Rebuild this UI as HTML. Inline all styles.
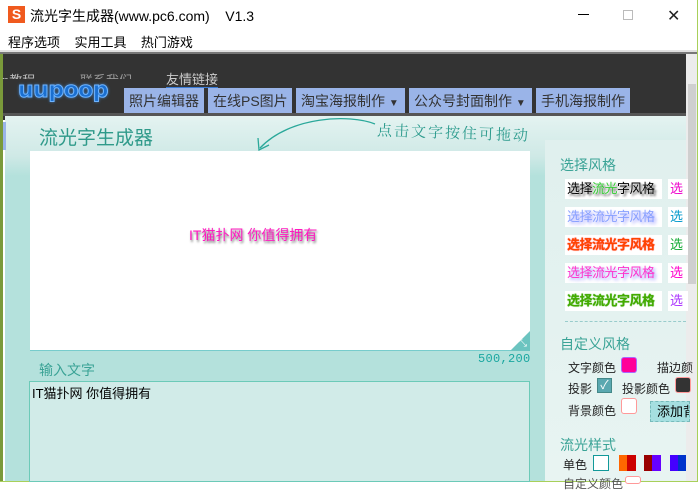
<!DOCTYPE html><html><head><meta charset="utf-8"><style>
*{margin:0;padding:0;box-sizing:border-box}
body{width:698px;height:482px;overflow:hidden;position:relative;background:#fff;font-family:"Liberation Sans","Noto Sans CJK SC",sans-serif;font-size:13px;color:#000}
.a{position:absolute}
.tab{position:absolute;top:88px;height:25px;background:#9ab4e8;color:#333;font-size:14px;line-height:27px;padding-left:5px;white-space:nowrap}
.sw{position:absolute;width:16px;height:16px;border-radius:3px}
.sty{position:absolute;width:97px;height:20px;background:#fff;font-size:13px;line-height:20px;padding-left:2px;letter-spacing:-0.5px;white-space:nowrap;overflow:hidden}
.lbl{position:absolute;font-size:12px;color:#222;white-space:nowrap}
</style></head><body>
<div class="a" style="left:8px;top:6px;width:17px;height:17px;background:#f05a1e;color:#fff;font-weight:bold;font-size:14px;line-height:17px;text-align:center">S</div>
<div class="a" style="left:30px;top:6px;font-size:14px">流光字生成器(www.pc6.com)&nbsp;&nbsp;&nbsp; V1.3</div>
<div class="a" style="left:578px;top:14px;width:11px;height:1px;background:#000"></div>
<div class="a" style="left:623px;top:10px;width:10px;height:10px;border:1px solid #bbb"></div>
<div class="a" style="left:667px;top:6px;font-size:16px;color:#222">✕</div>
<div class="a" style="left:8px;top:32px;font-size:13px">程序选项&nbsp;&nbsp;&nbsp; 实用工具&nbsp;&nbsp;&nbsp; 热门游戏</div>
<div class="a" style="left:0;top:50px;width:698px;height:3px;background:#e0e0e0"></div>
<div class="a" style="left:0;top:52px;width:698px;height:2px;background:#777"></div>
<div class="a" style="left:0;top:54px;width:688px;height:66px;background:#333"></div>
<div class="a" style="left:0;top:54px;width:3px;height:428px;background:#7a9a3a"></div>
<div class="a" style="left:2px;top:70px;color:#bbb;font-size:13px;height:9px;overflow:hidden">p教程</div>
<div class="a" style="left:80px;top:70px;color:#999;font-size:13px;height:9px;overflow:hidden">联系我们</div>
<div class="a" style="left:166px;top:72px;color:#ccc;font-size:13px;border-bottom:1px solid #3a7bd5;line-height:15px">友情链接</div>
<div class="a" style="left:18px;top:78px;font-family:'DejaVu Sans',sans-serif;font-weight:bold;font-size:22px;color:#1a6fd0;letter-spacing:-0.5px;-webkit-text-stroke:1px #6fb4ff;text-shadow:0 0 3px #48a0ff">uupoop</div>
<div class="tab" style="left:124px;width:80px">照片编辑器</div>
<div class="tab" style="left:208px;width:84px">在线PS图片</div>
<div class="tab" style="left:296px;width:109px">淘宝海报制作 <span style="font-size:10px">▼</span></div>
<div class="tab" style="left:409px;width:123px">公众号封面制作 <span style="font-size:10px">▼</span></div>
<div class="tab" style="left:536px;width:94px">手机海报制作</div>
<div class="a" style="left:3px;top:113px;width:685px;height:3px;background:#555"></div>
<div class="a" style="left:686px;top:54px;width:12px;height:428px;background:#ececec"></div>
<div class="a" style="left:688px;top:84px;width:8px;height:200px;background:#cfcfcf"></div>
<div class="a" style="left:697px;top:0;width:1px;height:482px;background:#a8d05a"></div>
<div class="a" style="left:0;top:481px;width:698px;height:1px;background:#a8d05a"></div>
<div class="a" style="left:5px;top:116px;width:681px;height:365px;background:linear-gradient(180deg,#e4f3f1 0,#cfe9e6 40px,#b4e1dc 60px,#b4e1dc 100%)"></div>
<div class="a" style="left:3px;top:122px;width:3px;height:28px;background:#9ab4e8"></div>
<div class="a" style="left:545px;top:140px;width:141px;height:341px;background:linear-gradient(180deg,#e0f0ee,#e8f4f2)"></div>
<div class="a" style="left:39px;top:123px;font-size:19px;color:#2f9a8a">流光字生成器</div>
<svg class="a" style="left:250px;top:116px" width="130" height="40"><path d="M125 8 C100 -2 40 0 10 32" stroke="#2aa89a" stroke-width="1.3" fill="none"/><path d="M8 22 L9 34 L19 29" stroke="#2aa89a" stroke-width="1.3" fill="none"/></svg>
<div class="a" style="left:377px;top:122px;font-size:15px;color:#2a9a8c;font-family:'Noto Serif CJK SC',serif;letter-spacing:2px;transform:rotate(2deg)">点击文字按住可拖动</div>
<div class="a" style="left:30px;top:151px;width:500px;height:200px;background:#fff;border-bottom:1px solid #7cc;"></div>
<div class="a" style="left:510px;top:331px;width:0;height:0;border-left:20px solid transparent;border-bottom:20px solid #6cc4c0"></div>
<div class="a" style="left:519px;top:338px;color:#fff;font-size:10px">⤡</div>
<div class="a" style="left:189px;top:225px;font-size:14px;color:#ff19c0;text-shadow:1px 2px 2px #777">IT猫扑网 你值得拥有</div>
<div class="a" style="left:478px;top:352px;font-size:12px;color:#1aa7a0;font-family:'Liberation Mono',monospace;letter-spacing:0.3px">500,200</div>
<div class="a" style="left:39px;top:360px;font-size:14px;color:#3aa396">输入文字</div>
<div class="a" style="left:29px;top:381px;width:501px;height:101px;background:#d1ebe8;border:1px solid #6ccab8;padding:1px 2px;font-size:13px">IT猫扑网 你值得拥有</div>
<div class="a" style="left:560px;top:155px;font-size:14px;color:#3aa396">选择风格</div>
<div class="sty" style="left:565px;top:179px;color:#000;text-shadow:0 0 1px #fff,2px 2px 2px #555">选择<span style="color:#3c3">流光</span>字风格</div>
<div class="sty" style="left:668px;top:179px;width:20px;color:#e0c">选</div>
<div class="sty" style="left:565px;top:207px;color:#88a0ff;text-shadow:2px 2px 3px #99f">选择流光字风格</div>
<div class="sty" style="left:668px;top:207px;width:20px;color:#09c">选</div>
<div class="sty" style="left:565px;top:235px;color:#f40;font-weight:bold;text-shadow:0 0 1px #f00">选择流光字风格</div>
<div class="sty" style="left:668px;top:235px;width:20px;color:#1a3">选</div>
<div class="sty" style="left:565px;top:263px;color:#f3c;text-shadow:2px 2px 3px #99f">选择流光字风格</div>
<div class="sty" style="left:668px;top:263px;width:20px;color:#f0c">选</div>
<div class="sty" style="left:565px;top:291px;color:#4a0;font-weight:bold;text-shadow:0 0 1px #2a0">选择流光字风格</div>
<div class="sty" style="left:668px;top:291px;width:20px;color:#a3f">选</div>
<div class="a" style="left:565px;top:321px;width:121px;border-top:1px dashed #9cc"></div>
<div class="a" style="left:560px;top:334px;font-size:14px;color:#3aa396">自定义风格</div>
<div class="lbl" style="left:568px;top:359px">文字颜色</div>
<div class="sw" style="left:621px;top:357px;background:#f09;border:1px solid #a6f"></div>
<div class="lbl" style="left:657px;top:359px">描边颜</div>
<div class="lbl" style="left:568px;top:380px">投影</div>
<div class="a" style="left:597px;top:378px;width:15px;height:15px;background:#5aa8b0;border:1px solid #488;color:#fff;font-size:12px;line-height:13px;text-align:center">✓</div>
<div class="lbl" style="left:622px;top:380px">投影颜色</div>
<div class="sw" style="left:675px;top:377px;background:#333;border:1px solid #f99"></div>
<div class="lbl" style="left:568px;top:402px">背景颜色</div>
<div class="sw" style="left:621px;top:398px;background:#fff;border:1px solid #f99"></div>
<div class="a" style="left:650px;top:401px;width:40px;height:21px;background:#a5dfe0;border:1px dashed #7bb;font-size:13px;line-height:20px;padding-left:6px;overflow:hidden;white-space:nowrap">添加背</div>
<div class="a" style="left:560px;top:435px;font-size:14px;color:#3aa396">流光样式</div>
<div class="lbl" style="left:563px;top:456px">单色</div>
<div class="a" style="left:593px;top:455px;width:16px;height:16px;background:#fff;border:1px solid #199"></div>
<div class="a" style="left:619px;top:455px;width:8px;height:16px;background:#f60"></div><div class="a" style="left:627px;top:455px;width:9px;height:16px;background:#c00"></div>
<div class="a" style="left:644px;top:455px;width:8px;height:16px;background:#900"></div><div class="a" style="left:652px;top:455px;width:9px;height:16px;background:#60f"></div>
<div class="a" style="left:670px;top:455px;width:8px;height:16px;background:#40f"></div><div class="a" style="left:678px;top:455px;width:8px;height:16px;background:#03c"></div>
<div class="lbl" style="left:563px;top:475px;color:#555">自定义颜色</div>
<div class="a" style="left:625px;top:476px;width:16px;height:8px;border:1px solid #f99;border-radius:3px;background:#fff"></div>
</body></html>
